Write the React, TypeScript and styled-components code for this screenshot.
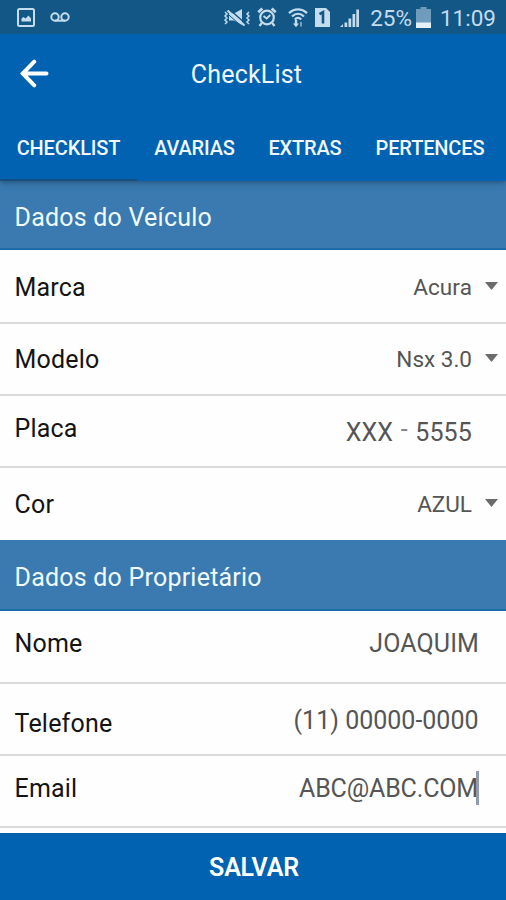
import React from "react";
import styled, { createGlobalStyle } from "styled-components";

const GlobalStyle = createGlobalStyle`
  *, *::before, *::after { box-sizing: border-box; }
  html, body { margin: 0; padding: 0; background: #fefefe; }
  body { font-family: Roboto, "Liberation Sans", sans-serif; overflow: hidden; }
`;

const Screen = styled.main`
  width: 506px;
  height: 900px;
  display: flex;
  flex-direction: column;
  background: #fefefe;
  overflow: hidden;
`;

const StatusBar = styled.header`
  height: 34px;
  flex: none;
  display: flex;
  align-items: center;
  justify-content: space-between;
  padding: 0 10px 0 17px;
  background: #135786;
  color: #c4dcee;
  svg { display: block; }
`;

const StatusGroup = styled.div<{ $gap?: number }>`
  display: flex;
  align-items: center;
  gap: ${(p) => p.$gap ?? 0}px;
`;

const StatusText = styled.span<{ $left: number }>`
  font-size: 22.5px;
  line-height: 34px;
  margin-left: ${(p) => p.$left}px;
  padding-top: 1px;
`;

const IconSlot = styled.span<{ $left: number }>`
  margin-left: ${(p) => p.$left}px;
`;

const AppBar = styled.div`
  height: 80px;
  flex: none;
  display: grid;
  grid-template-columns: 70px 1fr 70px;
  align-items: center;
  background: #0062b0;
  color: #fff;
  position: relative;
  z-index: 2;
`;

const BackButton = styled.button`
  border: 0;
  background: none;
  color: inherit;
  padding: 0 0 1px 19px;
  height: 100%;
  display: flex;
  align-items: center;
`;

const Title = styled.h1`
  margin: 0;
  padding: 2px 13px 0 0;
  text-align: center;
  font-size: 25px;
  line-height: 32px;
  font-weight: 400;
  letter-spacing: 0.2px;
  color: #f2f8ff;
`;

const Tabs = styled.nav`
  height: 67px;
  flex: none;
  display: flex;
  background: #0062b0;
  position: relative;
  z-index: 1;
  box-shadow: 0 1px 6px rgba(20, 50, 80, 0.65);
`;

const Tab = styled.button<{ $width: number; $active?: boolean }>`
  width: ${(p) => p.$width}px;
  flex: none;
  border: 0;
  border-bottom: 2px solid ${(p) => (p.$active ? "#174f80" : "transparent")};
  background: none;
  padding: 2px 0 0;
  color: #f2f8ff;
  font: 500 20px/28px Roboto, "Liberation Sans", sans-serif;
  letter-spacing: -0.15px;
  white-space: nowrap;
`;

const SectionTitle = styled.h2<{ $height: number }>`
  margin: 0;
  height: ${(p) => p.$height}px;
  flex: none;
  display: flex;
  align-items: center;
  padding: 5px 14.5px 0;
  background: #3a7ab0;
  border-bottom: 2px solid #1b6ca8;
  color: #f0faff;
  font-size: 25px;
  font-weight: 400;
  letter-spacing: 0.22px;
`;

const Row = styled.div<{ $height: number; $last?: boolean }>`
  height: ${(p) => p.$height}px;
  flex: none;
  display: flex;
  align-items: flex-start;
  padding: 0 8px 0 14.5px;
  border-bottom: ${(p) => (p.$last ? 0 : 2)}px solid #dadada;
`;

const Label = styled.span<{ $top: number }>`
  flex: 1;
  margin-top: ${(p) => p.$top}px;
  font-size: 25px;
  line-height: 30px;
  letter-spacing: 0.2px;
  color: #141414;
`;

const Value = styled.span<{ $top: number; $small?: boolean; $right?: number; $spacing?: number }>`
  display: flex;
  margin-top: ${(p) => p.$top}px;
  margin-right: ${(p) => p.$right ?? 0}px;
  font-size: ${(p) => (p.$small ? 22.5 : 25)}px;
  line-height: 30px;
  letter-spacing: ${(p) => p.$spacing ?? 0}px;
  color: #555;
  white-space: pre;
`;

const Dash = styled.span`
  margin: -3px 7.5px 0 7.5px;
  color: #858585;
`;

const Caret = styled.svg<{ $top: number }>`
  display: block;
  flex: none;
  width: 13px;
  height: 8px;
  margin: ${(p) => p.$top}px 0 0 13px;
  fill: #6b6b6b;
`;

const TextCursor = styled.i`
  width: 3px;
  height: 34px;
  margin: -3px 0 0 -2px;
  background: #8f9bae;
`;

const SaveButton = styled.button`
  flex: 1;
  margin-top: 5px;
  border: 0;
  padding: 3px 0 0 2px;
  background: #0062b0;
  color: #fff;
  font: 600 25px/30px Roboto, "Liberation Sans", sans-serif;
  letter-spacing: -0.2px;
`;

const PictureIcon = () => (
  <svg width="18" height="19" viewBox="0 0 18 19" fill="none" stroke="currentColor" strokeWidth="2">
    <rect x="1" y="1" width="16" height="17" rx="1.5" />
    <path d="M4.5 13.5v-3l2-1.5 2 1.5 3-3 2.5 3v3z" fill="currentColor" stroke="none" />
  </svg>
);

const VoicemailIcon = () => (
  <svg width="20" height="10" viewBox="0 0 20 10" fill="none" stroke="currentColor" strokeWidth="2">
    <circle cx="5" cy="5" r="3.7" />
    <circle cx="15" cy="5" r="3.7" />
    <path d="M5 8.7h10" />
  </svg>
);

const MuteIcon = () => (
  <svg width="28" height="19" viewBox="0 0 28 19" fill="none" stroke="currentColor" strokeWidth="1.5">
    <path d="M6 5.5h5l8-4.5v16l-8-4.500H6z" fill="currentColor" stroke="none" />
    <path d="M6 1l17 15" stroke="#135786" strokeWidth="1.5" />
    <path d="M4.500 2.500l17 15" strokeWidth="2.200" />
    <path d="M3 4.500l16.500 14.500" stroke="#135786" strokeWidth="1" />
    <path d="M2 4l2 2-2 2 2 2-2 2 2 2-2 2M26 4l-2 2 2 2-2 2 2 2-2 2 2 2" />
  </svg>
);

const AlarmIcon = () => (
  <svg width="20" height="20" viewBox="0 0 20 20" fill="none" stroke="currentColor" strokeWidth="2.2">
    <circle cx="10" cy="10.5" r="6.8" />
    <path d="M1.3 5.2l4-3.7M18.7 5.2l-4-3.7" strokeWidth="2.8" />
    <path d="M4.8 16l-2.3 3M15.2 16l2.3 3" />
    <path d="M6.5 9l3.2 2.5 3.600-3.500" strokeWidth="1.800" />
  </svg>
);

const WifiIcon = () => (
  <svg width="20" height="21" viewBox="0 0 20 21" fill="none" stroke="currentColor" strokeWidth="2.3">
    <path d="M1 6.200c5.500-5 12.500-5 18 0M4 9.500c3.700-3.500 8.300-3.500 12 0M6.800 12.500c2-2 4.400-2 6.400 0" />
    <path d="M8 13v5" strokeWidth="2.400" />
    <path d="M5 16.500h6l-3 3.700z" fill="currentColor" stroke="none" />
    <path d="M13 19.500v-4.500" strokeWidth="2" opacity=".55" />
  </svg>
);

const SimIcon = () => (
  <svg width="15" height="19" viewBox="0 0 15 19">
    <path d="M0 0h11l4 4v15H0z" fill="currentColor" />
    <path d="M4.500 6.200l3.500-2V15.500" fill="none" stroke="#135786" strokeWidth="2.600" />
  </svg>
);

const SignalIcon = () => (
  <svg width="19" height="19" viewBox="0 0 19 19" fill="currentColor">
    <path d="M0 19l3-3v3zM4.500 14.500h2.700V19H4.500zM8.500 10.500h2.700V19H8.500zM12.500 6h2.700v13h-2.700z" />
    <path d="M16.300 1.500H19V19h-2.700z" />
  </svg>
);

const BatteryIcon = () => (
  <svg width="15" height="21" viewBox="0 0 15 21">
    <path d="M0 2h4.500V0h6v2H15v19H0z" fill="#6f9cbd" />
    <path d="M0 15.500h15V21H0z" fill="#e2f0f8" />
  </svg>
);

const BackIcon = () => (
  <svg width="30" height="29" viewBox="0 0 30 29" fill="none" stroke="currentColor" strokeWidth="4" strokeLinecap="round" strokeLinejoin="miter">
    <path d="M15.200 2.700L3.800 14.500l11.400 11.800M4.500 14.500h23" />
  </svg>
);

type Field = {
  label: string;
  value: React.ReactNode;
  height: number;
  labelTop: number;
  valueTop: number;
  caret?: number;
  right?: number;
  spacing?: number;
  last?: boolean;
};

const vehicle: Field[] = [
  { label: "Marca", value: "Acura", height: 74, labelTop: 23, valueTop: 22, caret: 32, spacing: 0.1 },
  { label: "Modelo", value: "Nsx 3.0", height: 72, labelTop: 21, valueTop: 20, caret: 30, spacing: 0 },
  { label: "Placa", value: <>XXX<Dash>-</Dash>5555</>, height: 72, labelTop: 18, valueTop: 22, right: 26, spacing: 0.15 },
  { label: "Cor", value: "AZUL", height: 72, labelTop: 22, valueTop: 21, caret: 31, last: true },
];

const owner: Field[] = [
  { label: "Nome", value: "JOAQUIM", height: 73, labelTop: 18, valueTop: 18, right: 19, spacing: 0.1 },
  { label: "Telefone", value: "(11) 00000-0000", height: 72, labelTop: 25, valueTop: 22, right: 19.5 },
  { label: "Email", value: <>ABC@ABC.COM<TextCursor /></>, height: 72, labelTop: 18, valueTop: 18, right: 19, spacing: -0.15 },
];

const FieldRow = ({ field }: { field: Field }) => (
  <Row $height={field.height} $last={field.last}>
    <Label $top={field.labelTop}>{field.label}</Label>
    <Value
      $top={field.valueTop}
      $small={field.caret !== undefined}
      $right={field.right}
      $spacing={field.spacing}
    >
      {field.value}
    </Value>
    {field.caret !== undefined && (
      <Caret $top={field.caret} viewBox="0 0 13 8">
        <path d="M0 0h13L6.500 8z" />
      </Caret>
    )}
  </Row>
);

export default function App() {
  return (
    <>
      <GlobalStyle />
      <Screen>
        <StatusBar>
          <StatusGroup $gap={15}>
            <PictureIcon />
            <VoicemailIcon />
          </StatusGroup>
          <StatusGroup>
            <MuteIcon />
            <IconSlot $left={6}><AlarmIcon /></IconSlot>
            <IconSlot $left={11}><WifiIcon /></IconSlot>
            <IconSlot $left={7}><SimIcon /></IconSlot>
            <IconSlot $left={10}><SignalIcon /></IconSlot>
            <StatusText $left={11}>25%</StatusText>
            <IconSlot $left={4}><BatteryIcon /></IconSlot>
            <StatusText $left={9}>11:09</StatusText>
          </StatusGroup>
        </StatusBar>
        <AppBar>
          <BackButton aria-label="Voltar"><BackIcon /></BackButton>
          <Title>CheckList</Title>
        </AppBar>
        <Tabs>
          <Tab $width={137} $active>CHECKLIST</Tab>
          <Tab $width={115}>AVARIAS</Tab>
          <Tab $width={106}>EXTRAS</Tab>
          <Tab $width={144}>PERTENCES</Tab>
        </Tabs>
        <SectionTitle $height={69}>Dados do Veículo</SectionTitle>
        {vehicle.map((field) => <FieldRow key={field.label} field={field} />)}
        <SectionTitle $height={71}>Dados do Proprietário</SectionTitle>
        {owner.map((field) => <FieldRow key={field.label} field={field} />)}
        <SaveButton>SALVAR</SaveButton>
      </Screen>
    </>
  );
}
